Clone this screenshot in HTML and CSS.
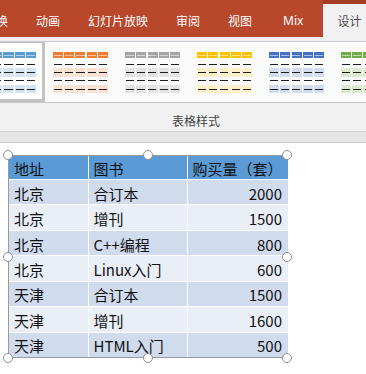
FILE: index.html
```html
<!DOCTYPE html>
<html lang="zh">
<head>
<meta charset="utf-8">
<link rel="stylesheet" href="styles.css">
</head>
<body>
<div class="app">
  <div class="tabs">
    <span class="tab first">换</span>
    <span class="tab">动画</span>
    <span class="tab">幻灯片放映</span>
    <span class="tab">审阅</span>
    <span class="tab">视图</span>
    <span class="tab mix">Mix</span>
    <span class="tab active">设计</span>
  </div>
  <div class="ribbon">
    <div class="gallery">
      <div class="item selected"><div class="thumb t-blue"><i class="hd"></i><i class="r"></i><i class="r b"></i><i class="r"></i><i class="r b"></i></div></div>
      <div class="item"><div class="thumb t-orange"><i class="hd"></i><i class="r"></i><i class="r b"></i><i class="r"></i><i class="r b"></i></div></div>
      <div class="item"><div class="thumb t-grey"><i class="hd"></i><i class="r"></i><i class="r b"></i><i class="r"></i><i class="r b"></i></div></div>
      <div class="item"><div class="thumb t-yellow"><i class="hd"></i><i class="r"></i><i class="r b"></i><i class="r"></i><i class="r b"></i></div></div>
      <div class="item"><div class="thumb t-blue2"><i class="hd"></i><i class="r"></i><i class="r b"></i><i class="r"></i><i class="r b"></i></div></div>
      <div class="item"><div class="thumb t-green"><i class="hd"></i><i class="r"></i><i class="r b"></i><i class="r"></i><i class="r b"></i></div></div>
    </div>
    <div class="group-label">表格样式</div>
    <div class="ribbon-foot"></div>
  </div>
  <div class="canvas">
    <div class="frame">
      <table class="data">
        <colgroup><col class="c1"><col class="c2"><col class="c3"></colgroup>
        <thead>
          <tr><th>地址</th><th>图书</th><th class="num-h">购买量（套）</th></tr>
        </thead>
        <tbody>
          <tr class="odd"><td>北京</td><td>合订本</td><td class="num">2000</td></tr>
          <tr class="even"><td>北京</td><td>增刊</td><td class="num">1500</td></tr>
          <tr class="odd"><td>北京</td><td>C++编程</td><td class="num">800</td></tr>
          <tr class="even"><td>北京</td><td>Linux入门</td><td class="num">600</td></tr>
          <tr class="odd"><td>天津</td><td>合订本</td><td class="num">1500</td></tr>
          <tr class="even"><td>天津</td><td>增刊</td><td class="num">1600</td></tr>
          <tr class="odd"><td>天津</td><td>HTML入门</td><td class="num">500</td></tr>
        </tbody>
      </table>
      <span class="handle h-tl"></span>
      <span class="handle h-tm"></span>
      <span class="handle h-tr"></span>
      <span class="handle h-ml"></span>
      <span class="handle h-mr"></span>
      <span class="handle h-bl"></span>
      <span class="handle h-bm"></span>
      <span class="handle h-br"></span>
    </div>
  </div>
</div>
</body>
</html>
```
FILE: styles.css
```css
* { box-sizing: border-box; }
html, body { margin: 0; padding: 0; }
body {
  width: 366px;
  height: 374px;
  overflow: hidden;
  background: #ffffff;
  font-family: "Noto Sans CJK SC", "Noto Sans", sans-serif;
}
.app { width: 366px; height: 374px; overflow: hidden; display: flex; flex-direction: column; }

/* tabs */
.tabs {
  height: 37px;
  flex: none;
  background: #b8472b;
  display: flex;
  align-items: stretch;
  white-space: nowrap;
}
.tab {
  color: #ffffff;
  font-size: 12px;
  line-height: 33px;
  padding: 4px 14px 0;
  flex: none;
}
.tab.first { margin-left: -18px; }
.tab.mix { padding-left: 17px; padding-right: 15px; font-family: "Noto Sans", sans-serif; }
.tab.active {
  margin-left: 5px;
  background: #f1f1f1;
  color: #4a4a4a;
  box-shadow: 0 -4px 0 #a33c22;
  margin-top: 4px;
  padding-top: 0;
  width: 60px;
}

/* ribbon */
.ribbon {
  flex: none;
  height: 106px;
  background: #f1f1f1;
  display: flex;
  flex-direction: column;
}
.gallery {
  margin-top: 4px;
  height: 62px;
  border-top: 1px solid #cdc5d0;
  border-bottom: 1px solid #c6c6c6;
  background: #fbfbfb;
  display: flex;
  margin-left: -27px;
}
.item {
  flex: none;
  width: 72px;
  height: 60px;
  display: flex;
  justify-content: center;
  padding-top: 10px;
}
.item.selected {
  border: 3px solid #c2c2c2;
  border-top-width: 1px;
  padding-top: 9px;
  background: #ffffff;
}
.thumb { width: 56px; display: flex; flex-direction: column; }
.thumb i { display: block; }
.thumb .hd {
  height: 6px;
  margin-bottom: 2px;
  background:
    repeating-linear-gradient(to right, rgba(255,255,255,0.55) 0 8px, transparent 8px 11.25px) 1px 50% / 100% 1px no-repeat,
    repeating-linear-gradient(to right, var(--c) 0 10px, transparent 10px 11.25px);
}
.thumb .r {
  height: 8.3px;
  background: repeating-linear-gradient(to right, #1e1e1e 0 8px, transparent 8px 11.25px) 1px 50% / 100% 1px no-repeat;
}
.thumb .r.b {
  background:
    repeating-linear-gradient(to right, #1e1e1e 0 8px, transparent 8px 11.25px) 1px 50% / 100% 1px no-repeat,
    repeating-linear-gradient(to right, var(--t) 0 10px, transparent 10px 11.25px);
}
.t-blue { --c: #5b9bd5; --t: #d6e3f3; }
.t-orange { --c: #ed7d31; --t: #fbe1d2; }
.t-grey { --c: #a5a5a5; --t: #e3e3e3; }
.t-yellow { --c: #ffc000; --t: #fff0c8; }
.t-blue2 { --c: #4472c4; --t: #d3dcef; }
.t-green { --c: #70ad47; --t: #dbead0; }

.group-label {
  height: 24px;
  text-align: center;
  font-size: 12px;
  line-height: 21px;
  padding-top: 3px;
  color: #444444;
  padding-left: 26px;
  margin-top: 4px;
}
.ribbon-foot {
  flex: 1;
  border-top: 1px solid #d0d0d0;
  border-bottom: 1px solid #c8c8c8;
  background: #e6e6e6;
}

/* canvas */
.canvas {
  flex: 1;
  background: #ffffff;
  padding: 12px 0 0 8px;
}
.frame {
  position: relative;
  width: 279px;
  height: 203px;
  border: 1px solid #9a9a9a;
}
.data {
  border-collapse: collapse;
  width: 100%;
  height: 100%;
  table-layout: fixed;
  font-size: 15px;
  color: #111111;
}
.data col.c1 { width: 79px; }
.data col.c2 { width: 99px; }
.data col.c3 { width: 101px; }
.data th, .data td {
  padding: 2px 6px 0 5px;
  text-align: left;
  font-weight: normal;
  white-space: nowrap;
  border-left: 1px solid #ffffff;
  border-top: 1px solid #ffffff;
}
.data tr > :first-child { border-left: none; }
.data thead th { background: #5b9bd5; border-top: none; }
.data .odd td { background: #d0dbee; }
.data .even td { background: #e9eef7; }
.data .num { text-align: right; }
.data th.num-h { text-align: left; }

.handle {
  position: absolute;
  width: 10px;
  height: 10px;
  border-radius: 50%;
  background: #ffffff;
  border: 1px solid #8f8f8f;
}
.h-tl { left: -6px; top: -6px; }
.h-tm { left: 134px; top: -6px; }
.h-tr { right: -6px; top: -6px; }
.h-ml { left: -6px; top: 96px; }
.h-mr { right: -6px; top: 96px; }
.h-bl { left: -6px; bottom: -6px; }
.h-bm { left: 134px; bottom: -6px; }
.h-br { right: -6px; bottom: -6px; }
```
